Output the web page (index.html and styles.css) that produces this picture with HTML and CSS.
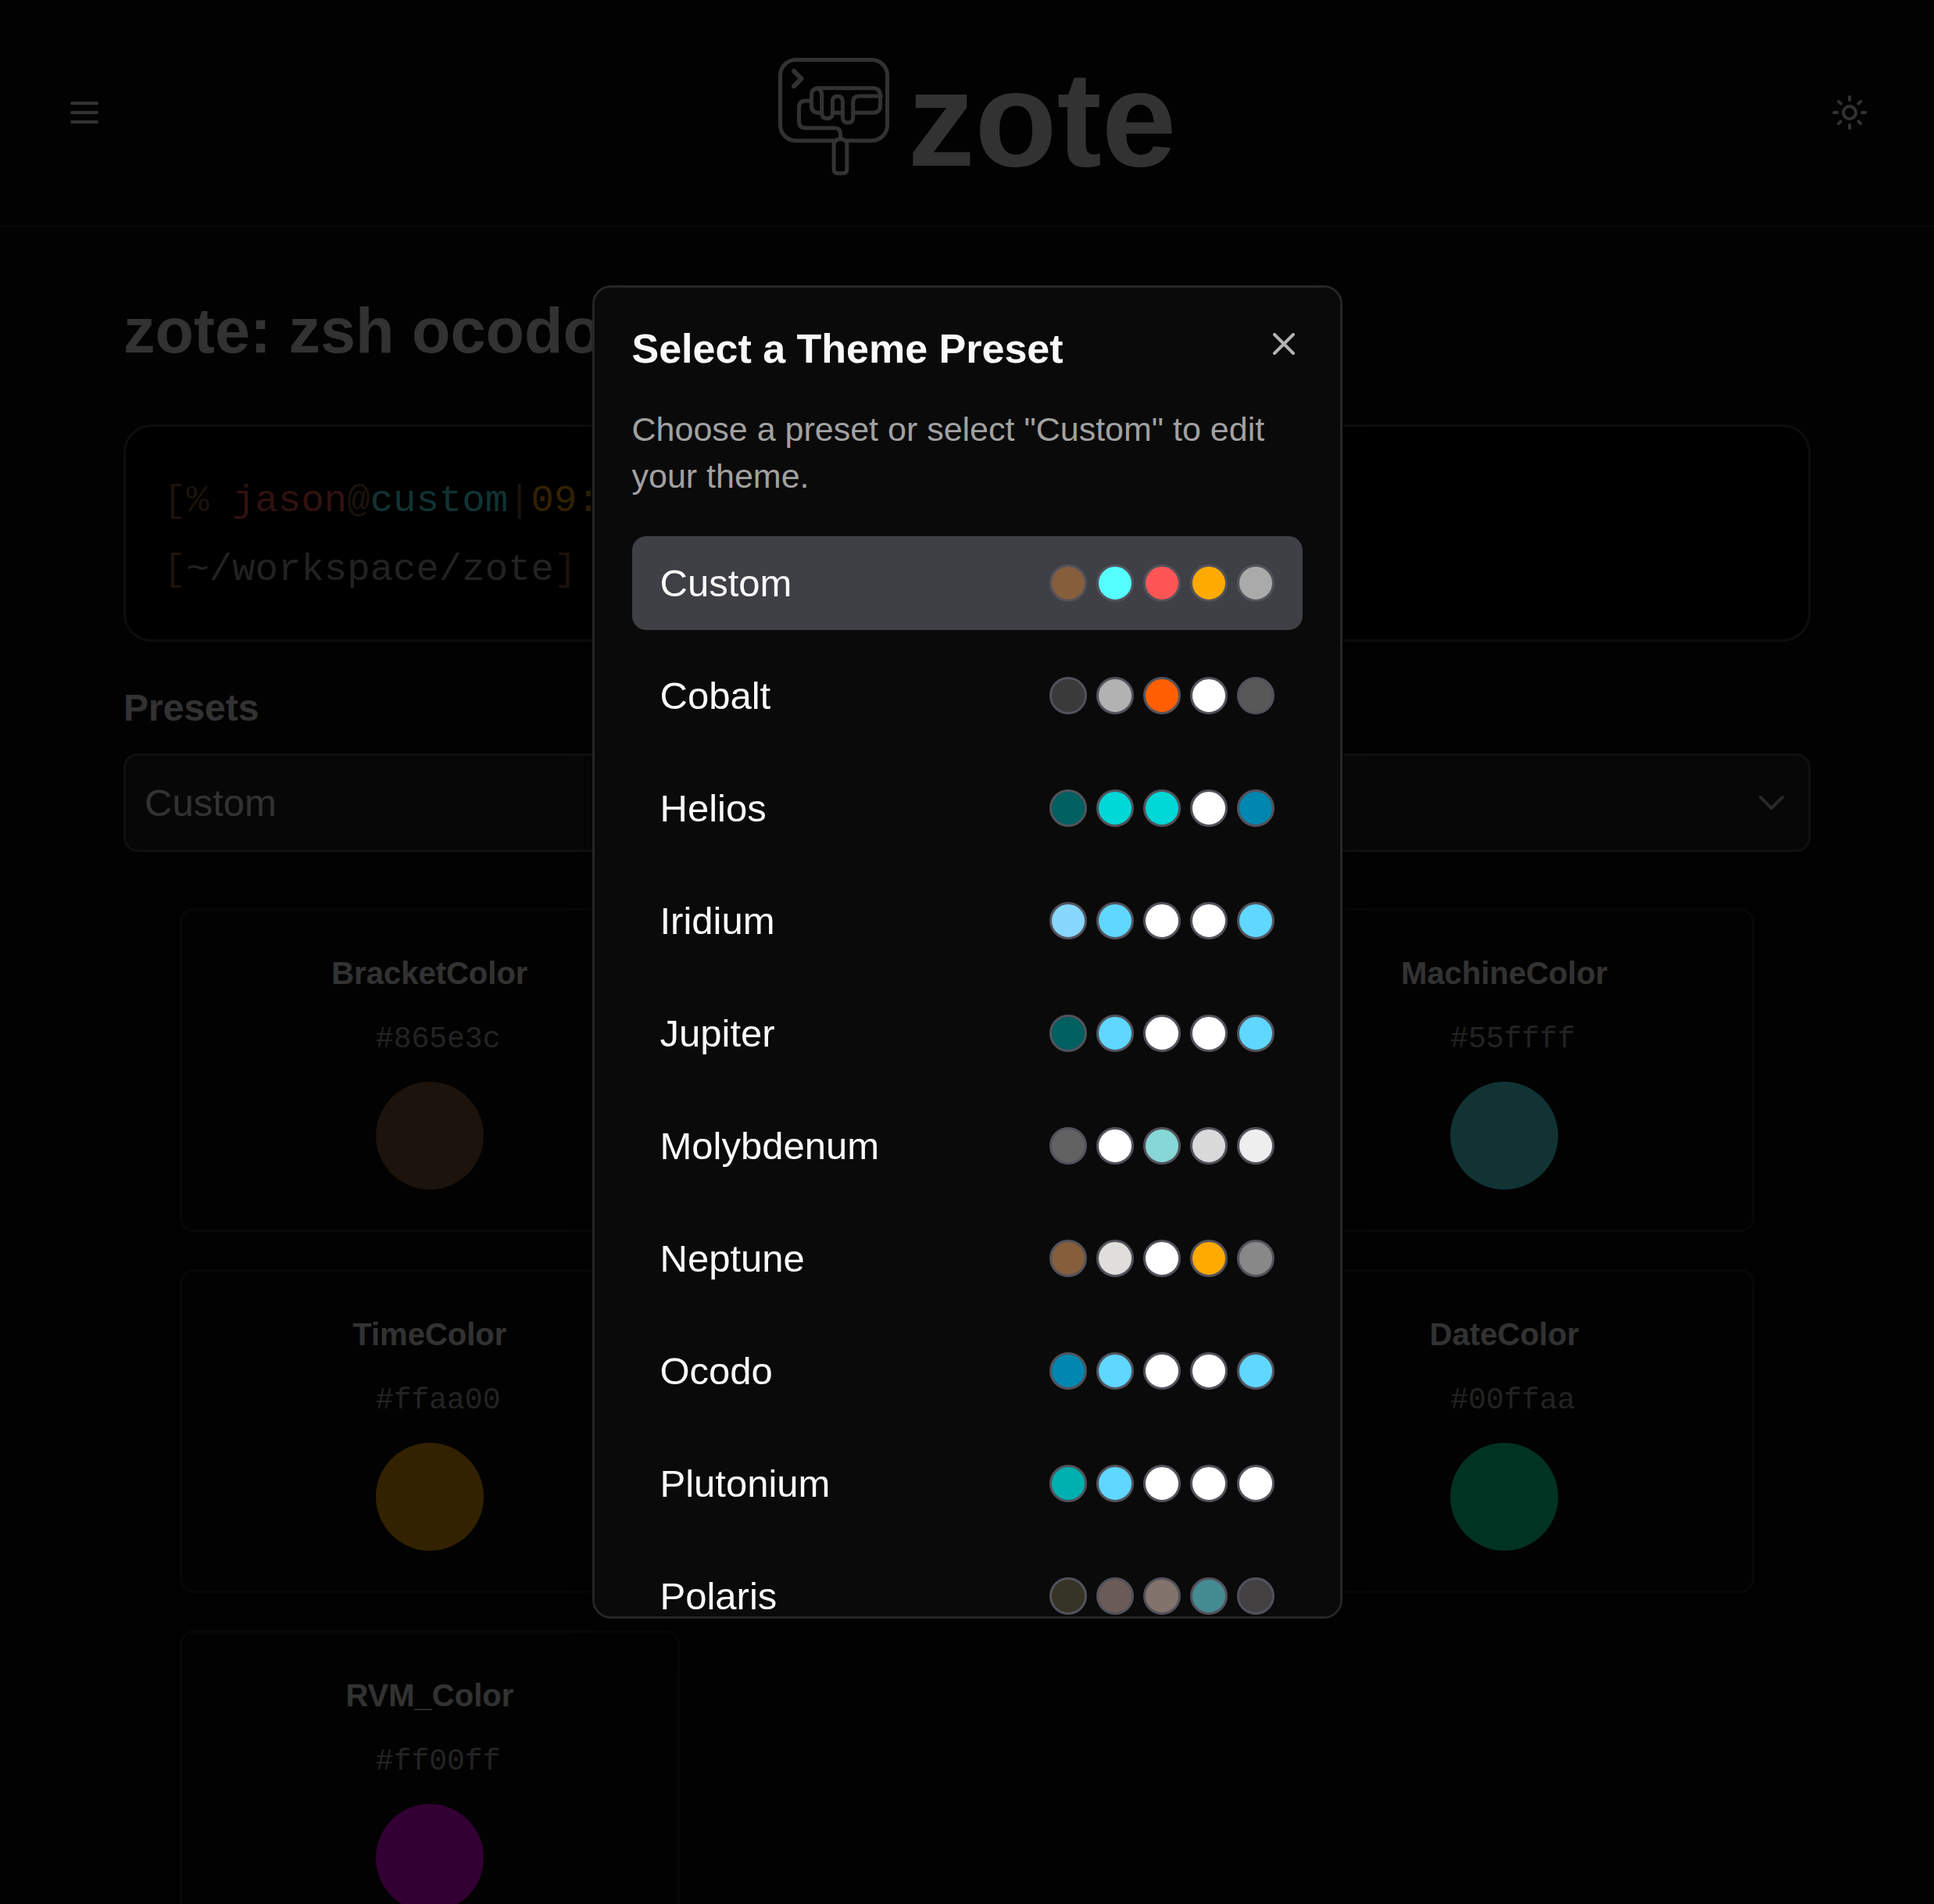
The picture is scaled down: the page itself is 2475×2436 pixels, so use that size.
FILE: index.html
```html
<!DOCTYPE html>
<html lang="en">
<head>
<meta charset="utf-8">
<meta name="viewport" content="width=device-width, initial-scale=1">
<title>zote</title>
<link rel="stylesheet" href="styles.css">
</head>
<body>
<div class="page">
<header class="site-header">
  <button class="icon-button" type="button" aria-label="Menu">
    <svg class="icon" viewBox="0 0 24 24"><path d="M4 6h16M4 12h16M4 18h16"/></svg>
  </button>
  <a class="brand" href="#">
    <svg class="brand-mark" viewBox="0 0 192 168" aria-hidden="true">
      <rect x="28.5" y="16.5" width="137" height="103.500" rx="20"/>
      <path class="prompt" d="M46 31l9.500 9.700L46 50.300"/>
      <path d="M65.800 69H61q-8.500 0-8.500 8.500V95.500q0 8.200 8.500 8.200h37.500q7 0 7 8V118"/>
      <path d="M81.700 84.300H78q-9.600 0-9.600-9.600V62q0-9.300 9.600-9.300h69q9.500 0 9.500 9.600v12.500q0 9.500-9.500 9.500h-25.300M95.400 84.300h13"/>
      <path d="M75.100 53q6.600 1 6.600 9V85q0 6.500 6.900 6.500t6.800-6.500V70q0-7 6.500-7t6.500 7v20.500q0 6.500 6.700 6.500t6.600-6.500V71q0-8 8-8h27.800"/>
      <path class="handle" d="M97.100 126q0-8 8.400-8t8.300 8v30.500q0 5.200-5 5.200h-6.700q-5 0-5-5.200z"/>
    </svg>
    <span class="brand-name">zote</span>
  </a>
  <button class="icon-button" type="button" aria-label="Toggle theme">
    <svg class="icon" viewBox="0 0 24 24"><circle cx="12" cy="12" r="4"/><path d="M12 2v2M12 20v2M4.930 4.930l1.410 1.410M17.660 17.660l1.410 1.410M2 12h2M20 12h2M6.340 17.660l-1.410 1.410M19.070 4.930l-1.410 1.410"/></svg>
  </button>
</header>

<main class="content">
  <h1 class="page-title">zote: zsh ocodo</h1>

  <pre class="terminal"><span class="c-bracket">[% </span><span class="c-user">jason</span><span class="c-bracket">@</span><span class="c-machine">custom</span><span class="c-bracket">|</span><span class="c-time">09:</span>
<span class="c-bracket">[</span><span class="c-path">~/workspace/zote</span><span class="c-bracket">]</span></pre>

  <label class="presets-label" for="preset">Presets</label>
  <div class="select-wrap">
    <select class="preset-select" id="preset"><option>Custom</option></select>
    <svg class="select-arrow" viewBox="0 0 24 24" aria-hidden="true"><path d="M6 9l6 6 6-6"/></svg>
  </div>

  <section class="color-grid">
    <div class="color-card start">
      <label class="color-name" for="bracket">BracketColor</label>
      <div class="color-body"><span class="color-hex">#865e3c</span><input class="color-input" type="color" id="bracket" value="#865e3c"></div>
    </div>
    <div class="color-card end">
      <label class="color-name" for="machine">MachineColor</label>
      <div class="color-body"><span class="color-hex">#55ffff</span><input class="color-input" type="color" id="machine" value="#55ffff"></div>
    </div>
    <div class="color-card start">
      <label class="color-name" for="time">TimeColor</label>
      <div class="color-body"><span class="color-hex">#ffaa00</span><input class="color-input" type="color" id="time" value="#ffaa00"></div>
    </div>
    <div class="color-card end">
      <label class="color-name" for="date">DateColor</label>
      <div class="color-body"><span class="color-hex">#00ffaa</span><input class="color-input" type="color" id="date" value="#00ffaa"></div>
    </div>
    <div class="color-card start">
      <label class="color-name" for="rvm">RVM_Color</label>
      <div class="color-body"><span class="color-hex">#ff00ff</span><input class="color-input" type="color" id="rvm" value="#ff00ff"></div>
    </div>
  </section>
</main>
</div>

<div class="overlay">
  <div class="modal" role="dialog" aria-modal="true" aria-labelledby="modal-title">
    <div class="modal-head">
      <h2 class="modal-title" id="modal-title">Select a Theme Preset</h2>
      <button class="icon-button close" type="button" aria-label="Close">
        <svg class="icon" viewBox="0 0 24 24"><path d="M18 6L6 18M6 6l12 12"/></svg>
      </button>
    </div>
    <p class="modal-text">Choose a preset or select "Custom" to edit your theme.</p>
    <div class="preset-list">
      <button class="preset selected" type="button">Custom<span class="swatches"><i class="swatch" style="background:#865e3c"></i><i class="swatch" style="background:#55ffff"></i><i class="swatch" style="background:#ff5555"></i><i class="swatch" style="background:#ffaa00"></i><i class="swatch" style="background:#aaaaaa"></i></span></button>
      <button class="preset" type="button">Cobalt<span class="swatches"><i class="swatch" style="background:#3a3a3a"></i><i class="swatch" style="background:#b2b2b2"></i><i class="swatch" style="background:#ff5f00"></i><i class="swatch" style="background:#ffffff"></i><i class="swatch" style="background:#585858"></i></span></button>
      <button class="preset" type="button">Helios<span class="swatches"><i class="swatch" style="background:#005f5f"></i><i class="swatch" style="background:#00d7d7"></i><i class="swatch" style="background:#00d7d7"></i><i class="swatch" style="background:#ffffff"></i><i class="swatch" style="background:#0087af"></i></span></button>
      <button class="preset" type="button">Iridium<span class="swatches"><i class="swatch" style="background:#87d7ff"></i><i class="swatch" style="background:#5fd7ff"></i><i class="swatch" style="background:#ffffff"></i><i class="swatch" style="background:#ffffff"></i><i class="swatch" style="background:#5fd7ff"></i></span></button>
      <button class="preset" type="button">Jupiter<span class="swatches"><i class="swatch" style="background:#005f5f"></i><i class="swatch" style="background:#5fd7ff"></i><i class="swatch" style="background:#ffffff"></i><i class="swatch" style="background:#ffffff"></i><i class="swatch" style="background:#5fd7ff"></i></span></button>
      <button class="preset" type="button">Molybdenum<span class="swatches"><i class="swatch" style="background:#626262"></i><i class="swatch" style="background:#ffffff"></i><i class="swatch" style="background:#87d7d7"></i><i class="swatch" style="background:#dadada"></i><i class="swatch" style="background:#eeeeee"></i></span></button>
      <button class="preset" type="button">Neptune<span class="swatches"><i class="swatch" style="background:#865e3c"></i><i class="swatch" style="background:#dfdeda"></i><i class="swatch" style="background:#ffffff"></i><i class="swatch" style="background:#ffaa00"></i><i class="swatch" style="background:#888888"></i></span></button>
      <button class="preset" type="button">Ocodo<span class="swatches"><i class="swatch" style="background:#0087af"></i><i class="swatch" style="background:#5fd7ff"></i><i class="swatch" style="background:#ffffff"></i><i class="swatch" style="background:#ffffff"></i><i class="swatch" style="background:#5fd7ff"></i></span></button>
      <button class="preset" type="button">Plutonium<span class="swatches"><i class="swatch" style="background:#00afaf"></i><i class="swatch" style="background:#5fd7ff"></i><i class="swatch" style="background:#ffffff"></i><i class="swatch" style="background:#ffffff"></i><i class="swatch" style="background:#ffffff"></i></span></button>
      <button class="preset" type="button">Polaris<span class="swatches"><i class="swatch" style="background:#353426"></i><i class="swatch" style="background:#6a5b58"></i><i class="swatch" style="background:#82736c"></i><i class="swatch" style="background:#458b92"></i><i class="swatch" style="background:#434142"></i></span></button>
    </div>
  </div>
</div>
</body>
</html>
```
FILE: styles.css
```css
* {
  box-sizing: border-box;
}

body {
  margin: 0;
  background: #0a0a0a;
  color: #fafafa;
  font-family: "Liberation Sans", Arial, sans-serif;
  font-size: 48px;
}

/* The page behind the dialog does not scroll. */
.page {
  height: 100vh;
  overflow: hidden;
}

button,
select {
  font: inherit;
  color: inherit;
}

button {
  margin: 0;
  padding: 0;
  border: 0;
  background: none;
}

.icon-button {
  display: flex;
}

.icon {
  width: 48px;
  height: 48px;
  fill: none;
  stroke: currentColor;
  stroke-width: 2;
  stroke-linecap: round;
  stroke-linejoin: round;
}

/* Header */

.site-header {
  display: flex;
  align-items: center;
  justify-content: space-between;
  height: 291px;
  padding: 0 84px;
  border-bottom: 3px solid #262626;
}

.brand {
  display: flex;
  align-items: center;
  color: inherit;
  text-decoration: none;
}

.brand-mark {
  width: 192px;
  height: 168px;
  fill: none;
  stroke: currentColor;
  stroke-width: 5;
  stroke-linecap: round;
  stroke-linejoin: round;
}

.prompt {
  stroke-width: 6;
}

.handle {
  fill: #0a0a0a;
}

.brand-name {
  padding-top: 16px;
  font-size: 172px;
  font-weight: 700;
  line-height: 180px;
}

/* Page */

.content {
  padding: 87px 158px 72px;
}

.page-title {
  margin: 0 0 75px;
  font-size: 81px;
  font-weight: 700;
  line-height: 90px;
}

.terminal {
  margin: 0 0 55px;
  padding: 51px 48px 45px;
  border: 3px solid #404040;
  border-radius: 36px;
  background: #000;
  font-family: "Liberation Mono", monospace;
  font-size: 49px;
  line-height: 88px;
}

.c-bracket {
  color: #865e3c;
}

.c-user {
  color: #ff5555;
}

.c-machine {
  color: #55ffff;
}

.c-time {
  color: #ffaa00;
}

.c-path {
  color: #aaaaaa;
}

.presets-label {
  display: block;
  margin-bottom: 28px;
  font-weight: 700;
  line-height: 60px;
}

.select-wrap {
  position: relative;
  margin-bottom: 72px;
}

.preset-select {
  display: block;
  width: 100%;
  height: 126px;
  padding: 0 24px;
  border: 3px solid #525252;
  border-radius: 18px;
  background: #262626;
  font-size: 49px;
  appearance: none;
}

.select-arrow {
  position: absolute;
  top: 35px;
  right: 22px;
  width: 56px;
  height: 56px;
  fill: none;
  stroke: #cccccc;
  stroke-width: 1.7;
  stroke-linecap: round;
  stroke-linejoin: round;
  pointer-events: none;
}

.color-grid {
  display: grid;
  grid-template-columns: repeat(3, 1fr);
  gap: 48px;
  padding: 0 72px;
}

.color-card {
  display: flex;
  flex-direction: column;
  align-items: center;
  padding: 51px;
  border: 3px solid #262626;
  border-radius: 18px;
  box-shadow: 0 12px 24px rgba(0, 0, 0, 0.3);
}

.start {
  grid-column: 1;
}

.end {
  grid-column: 3;
}

.color-name {
  margin-bottom: 26px;
  font-size: 40px;
  font-weight: 700;
  line-height: 58px;
}

.color-body {
  display: flex;
  flex-direction: column;
  gap: 24px;
  width: 138px;
}

.color-hex {
  color: #b0b0b0;
  font-family: "Liberation Mono", monospace;
  font-size: 38px;
  line-height: 60px;
  white-space: nowrap;
}

.color-input {
  width: 138px;
  height: 138px;
  padding: 0;
  border: 0;
  background: none;
  appearance: none;
}

.color-input::-webkit-color-swatch-wrapper {
  padding: 0;
}

.color-input::-webkit-color-swatch {
  border: 0;
  border-radius: 50%;
}

/* Preset dialog */

.overlay {
  position: fixed;
  inset: 0;
  display: grid;
  place-items: center;
  background: rgba(0, 0, 0, 0.8);
}

.modal {
  width: 960px;
  height: 70vh;
  padding: 48px;
  overflow-y: auto;
  border: 3px solid #262626;
  border-radius: 24px;
  background: #0a0a0a;
  box-shadow: 0 30px 45px rgba(0, 0, 0, 0.3);
  scrollbar-width: none;
}

.modal-head {
  display: flex;
  align-items: flex-start;
  justify-content: space-between;
}

.modal-title {
  margin: 0;
  font-size: 52px;
  font-weight: 700;
  line-height: 60px;
}

.close {
  opacity: 0.7;
}

.modal-text {
  margin: 43px 0 47px;
  color: #a1a1a1;
  font-size: 43px;
  line-height: 60px;
}

.preset-list {
  display: grid;
  gap: 24px;
}

.preset {
  display: flex;
  align-items: center;
  justify-content: space-between;
  padding: 24px 36px;
  border-radius: 18px;
  font-size: 49px;
  line-height: 72px;
}

.selected {
  background: #3f3f46;
}

.swatches {
  display: flex;
  gap: 12px;
}

.swatch {
  width: 48px;
  height: 48px;
  border: 3px solid #52525b;
  border-radius: 50%;
}
```
